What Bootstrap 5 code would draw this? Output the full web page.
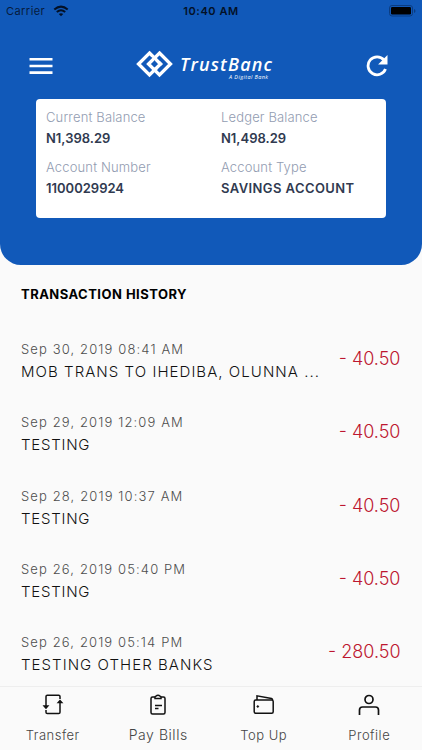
<!DOCTYPE html>
<html lang="en">
<head>
<meta charset="utf-8">
<meta name="viewport" content="width=device-width, initial-scale=1">
<title>TrustBanc</title>
<link href="https://cdn.jsdelivr.net/npm/bootstrap@5.3.0/dist/css/bootstrap.min.css" rel="stylesheet">
<style>
body{font-family:Inter,"Liberation Sans",sans-serif;background:#fafafa;height:750px;overflow:hidden;color:#222}
.hero{background:#1159b9;height:265px;border-radius:0 0 21px 21px}
.status{height:22px;padding:0 6px;font-size:11px;line-height:22px;color:#061b3d}
.status .side{width:100px}
.carrier{letter-spacing:.45px}
.clock{font-weight:600;letter-spacing:.55px;color:#031127}
.topbar{height:77px;padding:11px 34px 0 29px}
.brand{width:137px;height:36px;margin-right:11px}
.brand text{font-family:"Open Sans","Noto Sans",sans-serif;font-style:italic;fill:#fff}
.account{margin:0 36px;height:119px;border-radius:4px;padding:8px 10px;font-size:13px}
.account .lbl{color:#929cb1;line-height:20px;height:20px;letter-spacing:.15px;font-weight:300}
.account .val{color:#303a50;font-weight:600;line-height:22px;height:29.5px}
.account .kind{letter-spacing:.42px}
.account .cell{width:175px;flex:none}
.account .cell+.cell{width:155px}
.history{font-size:13px;font-weight:700;color:#000;line-height:20px;padding:19px 21px 0;height:64px;letter-spacing:.47px}
.tx{height:73.3px;padding:10px 21.5px 0 21px}
.tx .date{font-size:13px;line-height:20px;letter-spacing:1.12px;color:#4d4d4d;font-weight:300}
.tx .desc{font-size:15px;line-height:25px;letter-spacing:1.05px;font-weight:300;color:#111;white-space:nowrap}
.tx .word{letter-spacing:.75px}
.tx .amt{font-size:18px;line-height:22px;margin-top:9px;color:#bd1730;font-weight:300;white-space:nowrap}
.txlist{height:357px;overflow:hidden}
.tabs{height:64px;border-top:1px solid #eee;background:#fafafa;font-size:13px;color:#444;font-weight:300}
.tabs a{width:105.6px;color:inherit}
.tabs svg{margin-top:6px;margin-bottom:8px}
.tabs span{line-height:20px;letter-spacing:.5px}
.tabs .bills{font-size:14px;letter-spacing:.55px}
</style>
<script src="https://cdn.jsdelivr.net/npm/bootstrap@5.3.0/dist/js/bootstrap.bundle.min.js"></script>
</head>
<body>
<header class="hero">
  <div class="status d-flex justify-content-between align-items-center">
    <div class="side d-flex align-items-center"><span class="carrier">Carrier</span>
      <svg class="ms-2" width="16" height="12" viewBox="0 0 16 12" fill="none" stroke="#031127" stroke-width="2"><path d="M1.3 4.6Q8-1.4 14.7 4.6M3.8 7.1Q8 3.4 12.2 7.1"/><path d="M5.8 9Q8 7.3 10.2 9L8 11.2Z" fill="#031127" stroke="none"/></svg>
    </div>
    <div class="clock">10:40 AM</div>
    <div class="side d-flex justify-content-end">
      <svg width="27" height="12" viewBox="0 0 27 12"><rect x=".5" y=".5" width="23" height="10.5" rx="2.5" fill="none" stroke="#0b3c80"/><rect x="2" y="2" width="20" height="7.5" rx="1.2"/><path d="M25 4v4q1.5-.6 1.5-2T25 4Z" fill="#0b3c80"/></svg>
    </div>
  </div>
  <nav class="topbar d-flex justify-content-between align-items-center">
    <svg width="24" height="16" viewBox="0 0 24 16" fill="#fff"><path d="M.5 0h23v2.6H.5zM.5 6.7h23v2.6H.5zM.5 13.3h23v2.6H.5z"/></svg>
    <svg class="brand" viewBox="0 0 137 36"><g fill="none" stroke-linecap="butt"><path d="M13.500 5 24.500 16 13.500 27 2.500 16Z" stroke="#fff" stroke-width="3.300"/><path d="m15 18.500-2.500-2.500 5-5" stroke="#1159b9" stroke-width="4.800"/><path d="M23.500 5 34.500 16 23.500 27 12.500 16Z" stroke="#fff" stroke-width="3.300"/><path d="m20.500 20 3-3" stroke="#1159b9" stroke-width="4.800"/><path d="m18.500 22 6-6-2-2" stroke="#fff" stroke-width="3.300"/></g><text x="44" y="22.500" font-size="18" font-weight="600" textLength="92">TrustBanc</text><text x="93" y="31" font-size="5.500" font-weight="500" textLength="39">A Digital Bank</text></svg>
    <svg width="22" height="22" viewBox="0 0 22 22"><path d="M18 5A9 9 0 1 0 19.5 14" fill="none" stroke="#fff" stroke-width="2.8"/><path d="M21.500 0v9.400h-9.400Z" fill="#fff"/></svg>
  </nav>
  <section class="account bg-white d-flex">
    <div class="cell"><div class="lbl">Current Balance</div><div class="val">N1,398.29</div><div class="lbl">Account Number</div><div class="val">1100029924</div></div>
    <div class="cell"><div class="lbl">Ledger Balance</div><div class="val">N1,498.29</div><div class="lbl">Account Type</div><div class="val kind text-nowrap">SAVINGS ACCOUNT</div></div>
  </section>
</header>
<h1 class="history mb-0">TRANSACTION HISTORY</h1>
<main class="txlist">
  <div class="tx d-flex justify-content-between"><div><div class="date">Sep 30, 2019 08:41 AM</div><div class="desc">MOB TRANS TO IHEDIBA, OLUNNA ...</div></div><div class="amt">- 40.50</div></div>
  <div class="tx d-flex justify-content-between"><div><div class="date">Sep 29, 2019 12:09 AM</div><div class="desc word">TESTING</div></div><div class="amt">- 40.50</div></div>
  <div class="tx d-flex justify-content-between"><div><div class="date">Sep 28, 2019 10:37 AM</div><div class="desc word">TESTING</div></div><div class="amt">- 40.50</div></div>
  <div class="tx d-flex justify-content-between"><div><div class="date">Sep 26, 2019 05:40 PM</div><div class="desc word">TESTING</div></div><div class="amt">- 40.50</div></div>
  <div class="tx d-flex justify-content-between"><div><div class="date">Sep 26, 2019 05:14 PM</div><div class="desc">TESTING OTHER BANKS</div></div><div class="amt">- 280.50</div></div>
</main>
<nav class="tabs d-flex">
  <a class="d-flex flex-column align-items-center text-decoration-none"><svg width="24" height="24" viewBox="0 0 24 24" fill="none" stroke="#111" stroke-width="1.500"><path d="M5 14V3.500q0-1.300 1.300-1.300h11.400Q19 2.200 19 3.500V6M19 8v11.200q0 1.300-1.300 1.300H6.300Q5 20.500 5 19.200V17"/><path d="M3 13l2 2.300L7 13ZM17 9.700l2-2.300 2 2.300Z" fill="#111" stroke-width="1.300"/></svg><span>Transfer</span></a>
  <a class="d-flex flex-column align-items-center text-decoration-none"><svg width="24" height="24" viewBox="0 0 24 24" fill="none" stroke="#111" stroke-width="1.500"><path d="M9 4H6.500Q5 4 5 5.500v14Q5 21 6.500 21h11q1.500 0 1.500-1.500v-14Q19 4 17.500 4H15M9 5.500V4q0-.8.8-.8Q12 1.200 14.200 3.200q.8 0 .8.800v1.500ZM9 12.500h7M9 15.500h3.500"/></svg><span class="bills">Pay Bills</span></a>
  <a class="d-flex flex-column align-items-center text-decoration-none"><svg width="24" height="24" viewBox="0 0 24 24" fill="none" stroke="#111" stroke-width="1.500"><rect x="2.200" y="7" width="19" height="13.300" rx="1.500"/><path d="M5 7V2.800L19.500 5.500q1 .3 1 1.500"/><circle cx="5.800" cy="13.500" r=".8" fill="#111" stroke-width="1"/></svg><span>Top Up</span></a>
  <a class="d-flex flex-column align-items-center text-decoration-none"><svg width="24" height="24" viewBox="0 0 24 24" fill="none" stroke="#111" stroke-width="1.700"><circle cx="12" cy="6.500" r="4"/><path d="M2.500 22v-5q0-3 3-3h13q3 0 3 3v5"/></svg><span>Profile</span></a>
</nav>
</body>
</html>
